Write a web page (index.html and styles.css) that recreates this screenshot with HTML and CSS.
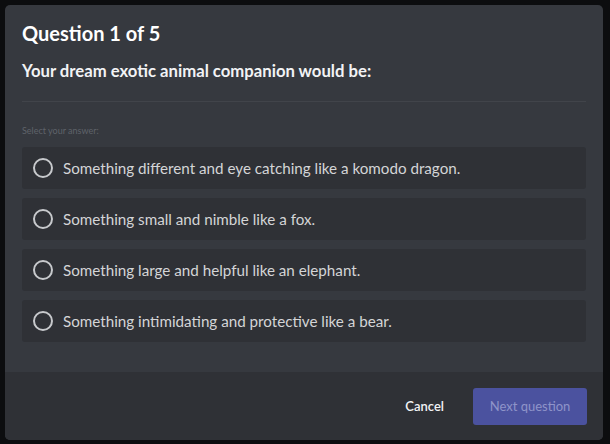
FILE: index.html
```html
<!DOCTYPE html>
<html>
<head>
<meta charset="utf-8">
<link rel="stylesheet" href="styles.css">
</head>
<body>
<div class="modal">
  <div class="content">
    <h1 class="title">Question 1 of 5</h1>
    <p class="question">Your dream exotic animal companion would be:</p>
    <div class="divider"></div>
    <div class="label">Select your answer:</div>
    <div class="options">
      <div class="option"><span class="radio"></span><span>Something different and eye catching like a komodo dragon.</span></div>
      <div class="option"><span class="radio"></span><span>Something small and nimble like a fox.</span></div>
      <div class="option"><span class="radio"></span><span>Something large and helpful like an elephant.</span></div>
      <div class="option"><span class="radio"></span><span>Something intimidating and protective like a bear.</span></div>
    </div>
  </div>
  <div class="footer">
    <button class="cancel">Cancel</button>
    <button class="next">Next question</button>
  </div>
</div>
</body>
</html>
```
FILE: styles.css
```css
html, body {
  margin: 0;
  padding: 0;
  background: #0c0d0f;
  font-family: Lato, "Open Sans", sans-serif;
}
.modal {
  margin: 5px 0 0 5px;
  width: 598px;
  height: 435px;
  background: #36393f;
  border-radius: 5px;
  display: flex;
  flex-direction: column;
  overflow: hidden;
}
.content {
  flex: 1;
  padding: 16px 17px 0 17px;
}
.title {
  margin: 0;
  font-size: 20px;
  line-height: 24px;
  font-weight: 700;
  color: #ffffff;
}
.question {
  margin: 16px 0 0;
  font-size: 16.7px;
  line-height: 20px;
  font-weight: 700;
  color: #f2f3f5;
}
.divider {
  margin-top: 20px;
  height: 1px;
  background: #41444a;
}
.label {
  margin-top: 23px;
  font-size: 9px;
  line-height: 12px;
  color: #5f636a;
}
.options {
  margin-top: 10px;
  display: flex;
  flex-direction: column;
  gap: 9px;
}
.option {
  height: 42px;
  background: #2f3136;
  border-radius: 3px;
  display: flex;
  align-items: center;
  padding-left: 11px;
  gap: 10px;
  font-size: 15.2px;
  color: #d4d5d7;
}
.radio {
  width: 16px;
  height: 16px;
  border: 2px solid #c7c9cc;
  border-radius: 50%;
  flex: none;
}
.footer {
  height: 68px;
  background: #2f3136;
  display: flex;
  align-items: center;
  justify-content: flex-end;
  padding: 0 16px;
  gap: 8px;
}
.footer button {
  font-family: inherit;
  font-size: 13px;
  border: none;
  cursor: pointer;
}
.cancel {
  background: transparent;
  color: #f2f3f5;
  padding: 0 21px;
  height: 37px;
  font-weight: 600;
}
.next {
  width: 114px;
  height: 37px;
  background: #4b529f;
  color: #8f94c9;
  border-radius: 3px;
}
```
